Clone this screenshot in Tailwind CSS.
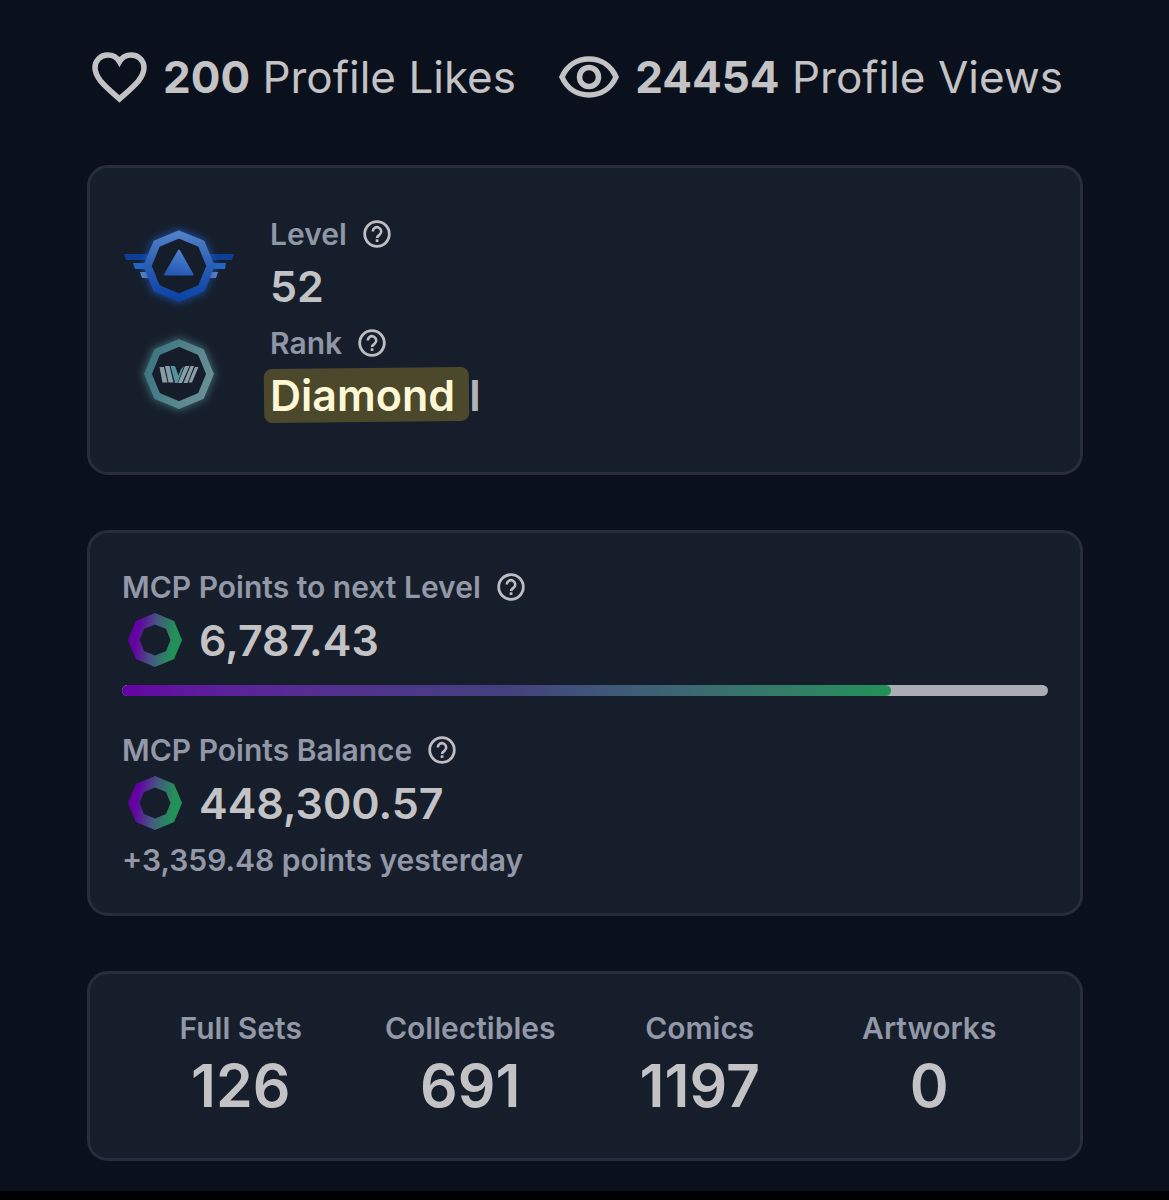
<!DOCTYPE html>
<html lang="en">
<head>
    <meta charset="UTF-8">
    <meta name="viewport" content="width=device-width, initial-scale=1.0">
    <title>Profile Stats</title>
    <script src="https://cdn.jsdelivr.net/npm/@tailwindcss/browser@4"></script>
    <style>
        body {
            font-family: 'Inter', sans-serif;
        }
    </style>
</head>
<body class="bg-[#0a101c] min-h-screen flex flex-col text-[#c3c2c5]">

    <!-- Shared icon shapes -->
    <svg class="hidden" aria-hidden="true">
        <symbol id="icon-help" viewBox="0 0 28 28">
            <circle cx="14" cy="14" r="12.3" fill="none" stroke="currentColor" stroke-width="2.8"/>
            <path d="M9.8 11.4a4.2 4.2 0 1 1 6.9 3.2c-1.6 1.2-2.6 1.8-2.6 3.4" fill="none" stroke="currentColor" stroke-width="2.6"/>
            <rect x="12.7" y="19.3" width="2.7" height="2.7" fill="currentColor"/>
        </symbol>
    </svg>

    <main class="w-full flex-1 pl-[87px] pr-[86px] pb-[30px]">

        <!-- Likes and views -->
        <header class="flex items-center justify-between pl-[5px] pr-5 pt-11 pb-[55px] text-[44px] leading-[66px] whitespace-nowrap">
            <div class="flex items-center gap-4">
                <svg class="w-[55px] h-[51px] shrink-0" viewBox="0 0 55 51" fill="none" stroke="currentColor" stroke-width="5.5" aria-hidden="true">
                    <path d="M27.5 47C13 34 3 26 3 15.8C3 8.5 8.700 3 15.7 3C20.5 3 25 5.300 27.5 9.7C30 5.300 34.5 3 39.3 3C46.3 3 52 8.5 52 15.8C52 26 42 34 27.5 47Z"/>
                </svg>
                <p><strong class="font-bold">200</strong> Profile Likes</p>
            </div>
            <div class="flex items-center gap-4">
                <svg class="w-[60px] h-[42px] shrink-0" viewBox="0 0 60 42" fill="none" stroke="currentColor" stroke-width="5.5" aria-hidden="true">
                    <path d="M3 21C8 9.5 18 3 30 3C42 3 52 9.5 57 21C52 32.5 42 39 30 39C18 39 8 32.5 3 21Z"/>
                    <circle cx="30" cy="21" r="9.5"/>
                </svg>
                <p><strong class="font-bold">24454</strong> Profile Views</p>
            </div>
        </header>

        <!-- Level and rank -->
        <section class="flex gap-[31px] bg-[#171e2b] border-3 border-[#272d3b] rounded-[21px] pl-[29px] pr-8 pt-10 pb-[51px]">
            <div class="flex flex-col gap-[18px] pt-[13px]">
                <svg class="w-[120px] h-[90px] overflow-visible" viewBox="0 0 120 90" aria-hidden="true">
                    <defs>
                        <linearGradient id="level-ring" x1="0" y1="0" x2="0" y2="1">
                            <stop offset="0" stop-color="#4f7fc4"/>
                            <stop offset="0.5" stop-color="#2a5eb4"/>
                            <stop offset="1" stop-color="#0c44a6"/>
                        </linearGradient>
                        <linearGradient id="level-arrow" x1="0.5" y1="0" x2="0.3" y2="1">
                            <stop offset="0" stop-color="#4f80cc"/>
                            <stop offset="1" stop-color="#2458b4"/>
                        </linearGradient>
                        <filter id="glow" x="-50%" y="-50%" width="200%" height="200%">
                            <feGaussianBlur stdDeviation="4"/>
                        </filter>
                    </defs>
                    <path d="M5 33H115L113 39H7Z" fill="#0d3f94"/>
                    <path d="M14 42H107L106 48H16Z" fill="#2564c0"/>
                    <path d="M21 51H99L97 57H23Z" fill="#6484c0"/>
                    <polygon points="60,13.5 82.3,22.7 91.5,45 82.3,67.3 60,76.5 37.7,67.3 28.5,45 37.7,22.7" fill="none" stroke="#1f5cc4" stroke-width="9" opacity="0.8" filter="url(#glow)"/>
                    <polygon points="60,13.5 82.3,22.7 91.5,45 82.3,67.3 60,76.5 37.7,67.3 28.5,45 37.7,22.7" fill="#151c2a" stroke="url(#level-ring)" stroke-width="7.8"/>
                    <path d="M60 29.5L73.5 53.5H46Z" fill="url(#level-arrow)" stroke="url(#level-arrow)" stroke-width="2" stroke-linejoin="round"/>
                </svg>
                <svg class="w-[120px] h-[90px] overflow-visible" viewBox="0 0 120 90" aria-hidden="true">
                    <defs>
                        <linearGradient id="rank-ring" x1="0" y1="0.3" x2="1" y2="0.7">
                            <stop offset="0" stop-color="#3c7580"/>
                            <stop offset="1" stop-color="#6b9096"/>
                        </linearGradient>
                    </defs>
                    <polygon points="60,14 81.9,23.1 91,45 81.9,66.9 60,76 38.1,66.9 29,45 38.1,23.1" fill="none" stroke="#4f929b" stroke-width="9" opacity="0.7" filter="url(#glow)"/>
                    <polygon points="60,14 81.9,23.1 91,45 81.9,66.9 60,76 38.1,66.9 29,45 38.1,23.1" fill="#151c2a" stroke="url(#rank-ring)" stroke-width="7.2"/>
                    <g fill="#879da7">
                        <path d="M40.5 38H45L48.5 53.5H43.5Z"/>
                        <path d="M46 37H50.5L54.5 53.5H49.5Z"/>
                        <path d="M66 37H70.5L63 54H59Z"/>
                        <path d="M71.500 37H75L68.5 54H64.5Z"/>
                        <path d="M76 38H79.500L73 53.5H69.5Z"/>
                    </g>
                    <path d="M51.5 37H56L59.5 46.5L62 40L65 37L58.5 54H56Z" fill="#57919b"/>
                </svg>
            </div>

            <dl class="flex flex-col gap-[5px]">
                <div>
                    <dt class="flex items-center gap-4 text-[30px] leading-[52px] font-semibold text-[#8f96a5]">
                        Level
                        <button type="button" aria-label="About level" class="text-[#bdbdc2]"><svg class="size-7"><use href="#icon-help"/></svg></button>
                    </dt>
                    <dd class="text-[43px] leading-[52px] font-semibold">52</dd>
                </div>
                <div>
                    <dt class="flex items-center gap-4 text-[30px] leading-[52px] font-semibold text-[#8f96a5]">
                        Rank
                        <button type="button" aria-label="About rank" class="text-[#bdbdc2]"><svg class="size-7"><use href="#icon-help"/></svg></button>
                    </dt>
                    <dd class="flex text-[43px] leading-[52px] font-semibold text-[#b1b3ba]">
                        <mark class="relative isolate bg-transparent pr-[14px] text-[#fff8d6]">
                            <span class="absolute -z-10 -left-[6px] right-0 -top-px -bottom-px rounded-lg bg-[#4b482c] rotate-[-0.6deg]"></span>
                            Diamond
                        </mark>
                        I
                    </dd>
                </div>
            </dl>
        </section>

        <!-- MCP points -->
        <section class="mt-[55px] bg-[#171e2b] border-3 border-[#272d3b] rounded-[21px] px-8 pt-7 pb-[27px]">
            <h2 class="flex items-center gap-4 text-[30px] leading-[52px] font-semibold text-[#9298a7]">
                MCP Points to next Level
                <button type="button" aria-label="About points to next level" class="text-[#bdbdc2]"><svg class="size-7"><use href="#icon-help"/></svg></button>
            </h2>
            <p class="flex items-center gap-[17px] pl-[6px] text-[43px] leading-[54px] font-semibold">
                <svg class="size-[54px]" viewBox="0 0 54 54" aria-hidden="true">
                    <defs>
                        <linearGradient id="mcp-ring" gradientUnits="userSpaceOnUse" x1="8" y1="25" x2="45" y2="31">
                            <stop offset="0" stop-color="#6400a4"/>
                            <stop offset="0.5" stop-color="#43597f"/>
                            <stop offset="1" stop-color="#229158"/>
                        </linearGradient>
                    </defs>
                    <path fill="url(#mcp-ring)" fill-rule="evenodd" d="M27 0L46.1 7.9L54 27L46.1 46.1L27 54L7.9 46.1L0 27L7.9 7.9ZM27 11.5L16 16L11.5 27L16 38L27 42.5L38 38L42.5 27L38 16Z"/>
                </svg>
                6,787.43
            </p>
            <div class="mt-[18px] h-[11px] rounded-full bg-[#aaadb4] overflow-hidden" role="progressbar" aria-label="Progress to next level" aria-valuemin="0" aria-valuemax="100" aria-valuenow="83">
                <div class="h-full w-[83%] rounded-full bg-linear-to-r from-[#6400a4] via-[#43407f] to-[#229158]"></div>
            </div>

            <h2 class="mt-7 flex items-center gap-4 text-[30px] leading-[52px] font-semibold text-[#9298a7]">
                MCP Points Balance
                <button type="button" aria-label="About points balance" class="text-[#bdbdc2]"><svg class="size-7"><use href="#icon-help"/></svg></button>
            </h2>
            <p class="flex items-center gap-[17px] pl-[6px] text-[43px] leading-[54px] font-semibold">
                <svg class="size-[54px]" viewBox="0 0 54 54" aria-hidden="true">
                    <path fill="url(#mcp-ring)" fill-rule="evenodd" d="M27 0L46.1 7.9L54 27L46.1 46.1L27 54L7.9 46.1L0 27L7.9 7.9ZM27 11.5L16 16L11.5 27L16 38L27 42.5L38 38L42.5 27L38 16Z"/>
                </svg>
                448,300.57
            </p>
            <p class="mt-1 text-[30px] leading-[52px] font-semibold text-[#9298a7]">+3,359.48 points yesterday</p>
        </section>

        <!-- Collection totals -->
        <section class="mt-[55px] bg-[#171e2b] border-3 border-[#272d3b] rounded-[21px] px-9 pt-7 pb-10">
            <dl class="grid grid-cols-4 text-center">
                <div>
                    <dt class="text-[30px] leading-[52px] font-semibold text-[#9298a7]">Full Sets</dt>
                    <dd class="text-[59px] leading-[64px] font-semibold">126</dd>
                </div>
                <div>
                    <dt class="text-[30px] leading-[52px] font-semibold text-[#9298a7]">Collectibles</dt>
                    <dd class="text-[59px] leading-[64px] font-semibold">691</dd>
                </div>
                <div>
                    <dt class="text-[30px] leading-[52px] font-semibold text-[#9298a7]">Comics</dt>
                    <dd class="text-[59px] leading-[64px] font-semibold">1197</dd>
                </div>
                <div>
                    <dt class="text-[30px] leading-[52px] font-semibold text-[#9298a7]">Artworks</dt>
                    <dd class="text-[59px] leading-[64px] font-semibold">0</dd>
                </div>
            </dl>
        </section>
    </main>

    <footer class="h-[9px] bg-black"></footer>

</body>
</html>
